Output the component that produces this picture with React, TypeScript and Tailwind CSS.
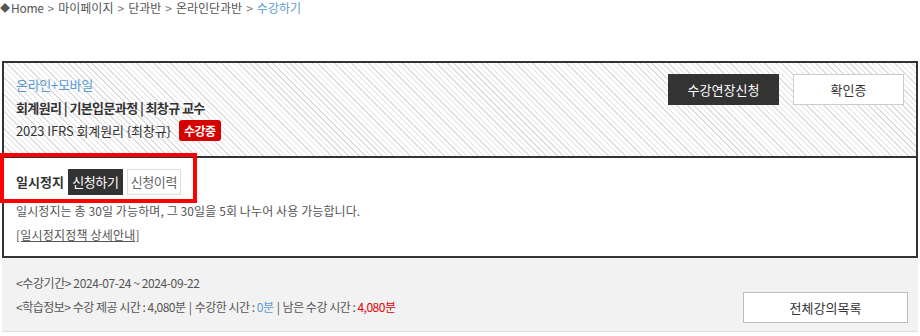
import React from "react";

const font = { fontFamily: '"Noto Sans CJK KR", "Noto Sans", sans-serif' };

export default function App() {
  return (
    <div className="w-[920px] h-[336px] bg-white text-[#555] relative overflow-hidden" style={font}>
      {/* breadcrumb */}
      <div className="h-[16px] flex items-center text-[12px] leading-[16px] text-[#555]">
        <span className="text-[10px] mr-[1px]">◆</span>
        <span className="tracking-[-0.3px]">Home</span>
        <span className="mx-[4px] text-[#777]">&gt;</span>
        <span>마이페이지</span>
        <span className="mx-[4px] text-[#777]">&gt;</span>
        <span>단과반</span>
        <span className="mx-[4px] text-[#777]">&gt;</span>
        <span>온라인단과반</span>
        <span className="mx-[4px] text-[#777]">&gt;</span>
        <span className="text-[#5b9bd5]">수강하기</span>
      </div>

      <div className="mt-[45px] mx-[2px] border-2 border-[#333] border-b-2">
        {/* striped header */}
        <div className="flex justify-between border-b-2 border-[#333] bg-[repeating-linear-gradient(45deg,#ffffff_0px,#ffffff_3px,#dedede_3px,#dedede_4px)] pl-[12px] pr-[12px] pt-[11px] pb-[14px] h-[95px]">
          <div className="flex flex-col">
            <div className="text-[13px] leading-[22px] text-[#5b9bd5] tracking-[-0.3px]">온라인+모바일</div>
            <div className="text-[13px] leading-[23px] font-bold text-[#333] tracking-[-0.6px]">회계원리 | 기본입문과정 | 최창규 교수</div>
            <div className="flex items-center text-[13px] leading-[23px] text-[#333]">
              <span className="tracking-[-0.1px]">2023 IFRS 회계원리 {"{최창규}"}</span>
              <span className="ml-[8px] h-[21px] px-[5px] rounded-[3px] bg-[#d60000] text-white text-[12px] font-bold leading-[21px] tracking-[-0.5px]">수강중</span>
            </div>
          </div>
          <div className="flex gap-[14px]">
            <button className="w-[111px] h-[31px] bg-[#333] text-white text-[13px]">수강연장신청</button>
            <button className="w-[111px] h-[31px] bg-white border border-[#ccc] text-[#333] text-[13px]">확인증</button>
          </div>
        </div>

        {/* pause section */}
        <div className="px-[12px] pt-[11px] pb-[10px] bg-white">
          <div className="flex items-center h-[26px] gap-[4px]">
            <span className="text-[13px] font-bold text-[#333] tracking-[0px]">일시정지</span>
            <span className="h-[26px] w-[55px] bg-[#333] text-white text-[13px] flex items-center justify-center tracking-[-0.4px]">신청하기</span>
            <span className="h-[26px] w-[54px] border border-[#ddd] bg-white text-[#666] text-[13px] flex items-center justify-center tracking-[-0.4px]">신청이력</span>
          </div>
          <div className="mt-[5px] text-[12px] leading-[22px] text-[#555] tracking-[0.1px]">일시정지는 총 30일 가능하며, 그 30일을 5회 나누어 사용 가능합니다.</div>
          <div className="mt-[2px] text-[12px] leading-[22px] text-[#555] tracking-[0.2px]">
            <span className="underline">[일시정지정책 상세안내]</span>
          </div>
        </div>
      </div>

      {/* gray info */}
      <div className="mx-[2px] h-[74px] bg-[#f2f2f2] border-b border-[#ddd] flex justify-between items-center pl-[14px] pr-[10px]">
        <div className="flex flex-col text-[12px] leading-[24px] text-[#555]">
          <div className="tracking-[-0.4px]">&lt;수강기간&gt; 2024-07-24 ~ 2024-09-22</div>
          <div className="tracking-[-0.5px]">
            &lt;학습정보&gt; 수강 제공 시간 : 4,080분 <span className="mx-[1px]">|</span> 수강한 시간 : <span className="text-[#5b9bd5]">0분</span>{" "}
            <span className="mx-[1px]">|</span> 남은 수강 시간 : <span className="text-[#e00000]">4,080분</span>
          </div>
        </div>
        <button className="mt-[26px] w-[165px] h-[31px] bg-white border border-[#bbb] text-[#333] text-[13px]">전체강의목록</button>
      </div>

      {/* red annotation */}
      <div className="absolute left-0 top-[153px] w-[197px] h-[50px] border-4 border-[#ff0000] pointer-events-none" />
    </div>
  );
}
